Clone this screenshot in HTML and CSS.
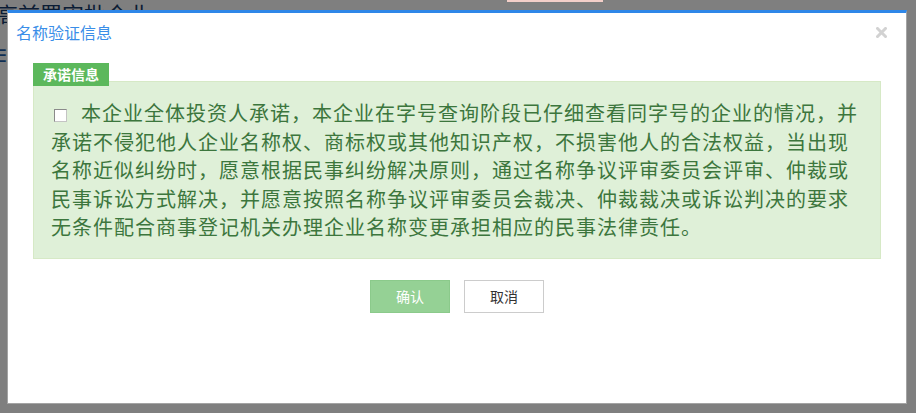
FILE: index.html
```html
<!DOCTYPE html>
<html lang="zh-CN">
<head>
<meta charset="utf-8">
<title>名称验证信息</title>
<link rel="stylesheet" href="styles.css">
</head>
<body>
<div class="page">
  <div class="page-title">高前置审批企业</div>
  <div class="page-side">☰</div>
</div>
<div class="page-badge"></div>
<div class="overlay"></div>
<div class="modal">
  <div class="modal-header">
    <span class="modal-title">名称验证信息</span>
    <span class="close" aria-label="关闭">
      <svg width="11" height="11" viewBox="0 0 11 11"><path d="M1.5 1.5 L9.5 9.5 M9.5 1.5 L1.5 9.5" stroke="#d2d2d2" stroke-width="3" stroke-linecap="square" fill="none"/></svg>
    </span>
  </div>
  <div class="modal-body">
    <div class="tag">承诺信息</div>
    <div class="promise"><input type="checkbox" class="cb">本企业全体投资人承诺，本企业在字号查询阶段已仔细查看同字号的企业的情况，并承诺不侵犯他人企业名称权、商标权或其他知识产权，不损害他人的合法权益，当出现名称近似纠纷时，愿意根据民事纠纷解决原则，通过名称争议评审委员会评审、仲裁或民事诉讼方式解决，并愿意按照名称争议评审委员会裁决、仲裁裁决或诉讼判决的要求无条件配合商事登记机关办理企业名称变更承担相应的民事法律责任。</div>
    <div class="actions">
      <button class="btn btn-ok" disabled>确认</button>
      <button class="btn btn-cancel">取消</button>
    </div>
  </div>
</div>
</body>
</html>
```

FILE: styles.css
```css
html, body {
  margin: 0;
  padding: 0;
  width: 916px;
  height: 413px;
  overflow: hidden;
  background: #ffffff;
  font-family: "Noto Sans CJK SC", "Noto Sans", "Liberation Sans", sans-serif;
}

.page {
  padding: 1px 0 0 0;
}

.page-title {
  font-size: 22px;
  line-height: 24px;
  color: #163a6a;
  margin-left: -4px;
}

.page-side {
  margin-top: 20px;
  margin-left: -9px;
  font-size: 18px;
  line-height: 18px;
  color: #1f5fa8;
}

.page-badge {
  position: absolute;
  top: 0;
  left: 507px;
  width: 96px;
  height: 2px;
  background: #f4cfc9;
  z-index: 3;
}

.overlay {
  position: fixed;
  inset: 0;
  background: rgba(0, 0, 0, 0.5);
  z-index: 1;
}

.modal {
  position: absolute;
  left: 7px;
  top: 10px;
  width: 900px;
  height: 394px;
  box-sizing: border-box;
  background: #ffffff;
  border: 1px solid #a4a4a4;
  border-top: 3px solid #2f87e8;
  z-index: 2;
  display: flex;
  flex-direction: column;
}

.modal-header {
  display: flex;
  align-items: center;
  justify-content: space-between;
  padding: 10px 19px 10px 8px;
}

.modal-title {
  font-size: 16px;
  line-height: 18px;
  color: #3a8ee8;
}

.close {
  display: flex;
  width: 11px;
  height: 11px;
}

.modal-body {
  padding: 12px 25px 0 25px;
  display: flex;
  flex-direction: column;
  align-items: flex-start;
}

.tag {
  position: relative;
  z-index: 1;
  height: 23px;
  line-height: 23px;
  padding: 0 10px;
  background: #5cb85c;
  color: #ffffff;
  font-size: 14px;
  font-weight: bold;
  margin-bottom: -5px;
}

.promise {
  align-self: stretch;
  background: #dff0d8;
  border: 1px solid #d6e9c6;
  color: #3c763d;
  font-size: 20px;
  line-height: 1.428571;
  letter-spacing: 1px;
  padding: 17px 17px 16px 17px;
}

.cb {
  appearance: none;
  -webkit-appearance: none;
  width: 13px;
  height: 13px;
  box-sizing: border-box;
  margin: 0 14px 0 3px;
  vertical-align: -1px;
  background: #ffffff;
  border: 1px solid #8a8a8a;
  border-right-color: #c4c4c4;
  border-bottom-color: #c4c4c4;
}

.actions {
  align-self: stretch;
  display: flex;
  justify-content: center;
  gap: 14px;
  margin-top: 21px;
}

.btn {
  width: 80px;
  height: 33px;
  box-sizing: border-box;
  font-family: "Noto Sans CJK SC", "Noto Sans", sans-serif;
  font-size: 14px;
  padding: 0;
  border-radius: 0;
  cursor: pointer;
}

.btn-ok {
  background: #95d195;
  border: 1px solid #8bca8b;
  color: #ffffff;
}

.btn-cancel {
  background: #ffffff;
  border: 1px solid #cccccc;
  color: #333333;
}
```
